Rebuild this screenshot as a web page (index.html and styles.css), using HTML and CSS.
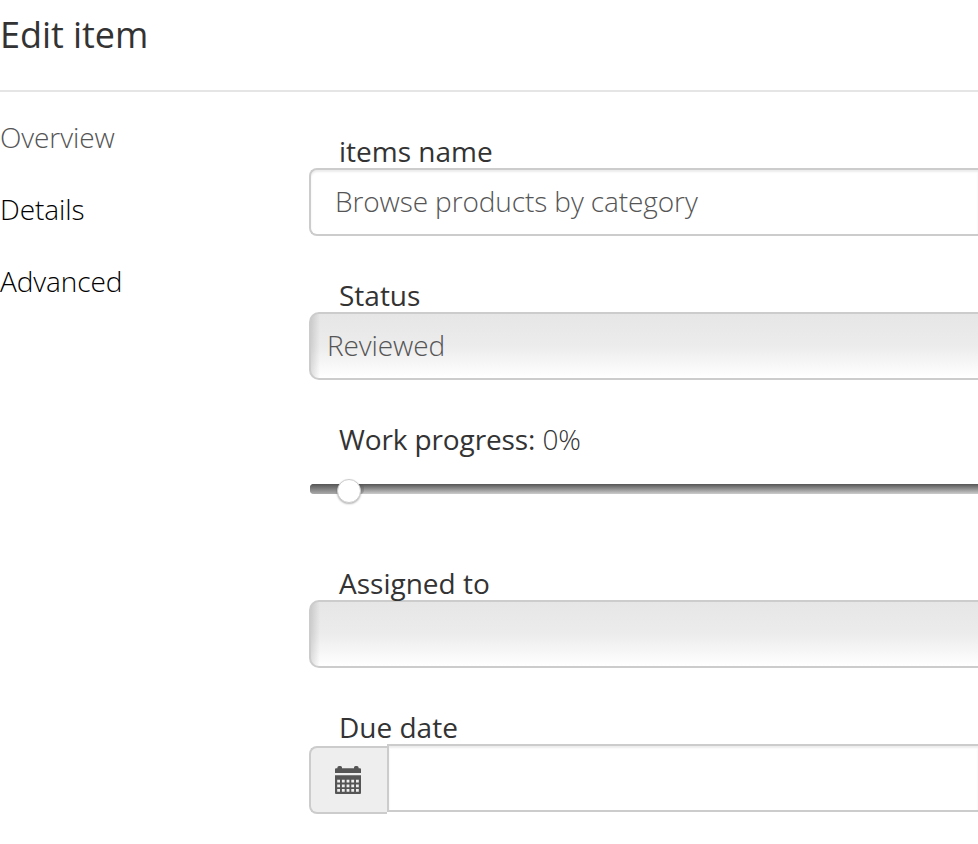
FILE: index.html
```
<!DOCTYPE html>
<html lang="en">
<head>
<meta charset="utf-8">
<title>Edit item</title>
<link rel="stylesheet" href="styles.css">
</head>
<body>
<header class="header"><h1>Edit item</h1></header>
<div class="layout">
  <nav class="nav">
    <a class="active">Overview</a>
    <a>Details</a>
    <a>Advanced</a>
  </nav>
  <main class="form">
    <div class="field">
      <label>items name</label>
      <div class="control input">Browse products by category</div>
    </div>
    <div class="field">
      <label>Status</label>
      <div class="control select">Reviewed</div>
    </div>
    <div class="field">
      <label class="progress-label">Work progress: <span class="percent">0%</span></label>
      <div class="slider"><div class="fill"><div class="thumb"></div></div></div>
    </div>
    <div class="field">
      <label>Assigned to</label>
      <div class="control select"></div>
    </div>
    <div class="field">
      <label>Due date</label>
      <div class="date">
        <div class="addon">
          <svg width="26" height="28" viewBox="0 0 26 28">
            <path fill="#555" d="M0 7V3.2Q0 2.2 1 2.2H2.4V1.5Q2.4 0 4 0H5.5Q7 0 7 1.5V2.2H19V1.5Q19 0 20.5 0H22Q23.6 0 23.6 1.5V2.2H25Q26 2.2 26 3.2V7zM0 9.2H26V27Q26 28 25 28H1Q0 28 0 27z"/>
            <path stroke="#eee" stroke-width="2.8" stroke-dasharray="2.8 1.9" d="M2.2 15.2H23.8M2.2 19.8H23.8M2.2 24.4H23.8"/>
          </svg>
        </div>
        <div class="date-input"></div>
      </div>
    </div>
  </main>
</div>
</body>
</html>
```
FILE: styles.css
```
* { box-sizing: border-box; }
body { margin: 0; background: #fff; color: #333; font: 400 28px/40px "Open Sans", sans-serif; }
.header { height: 92px; border-bottom: 2px solid #e5e5e5; }
h1 { margin: 0; font-size: 36px; font-weight: 400; line-height: 70px; letter-spacing: -.05px; }
.layout { display: flex; }
.nav { width: 309px; flex: none; display: flex; flex-direction: column; gap: 32px; padding-top: 25px; font-weight: 300; letter-spacing: -.1px; color: #000; }
.nav .active { color: #555; }
.form { flex: 1; min-width: 0; padding-top: 40px; }
.field { height: 144px; }
label { display: block; height: 36px; padding-left: 30px; line-height: 38px; white-space: nowrap; }
.progress-label { letter-spacing: -.12px; }
.percent { font-weight: 300; }
.control { height: 68px; border: 2px solid #ccc; border-right: 0; border-radius: 8px 0 0 8px; font-weight: 300; line-height: 62px; letter-spacing: -.1px; color: #555; }
.input { padding-left: 24px; box-shadow: inset 0 2px 2px rgba(0,0,0,.075); }
.select { padding-left: 16px; border-radius: 10px 0 0 10px; background: linear-gradient(90deg, rgba(0,0,0,.12), transparent 9px), linear-gradient(#e6e6e6, #ececec 50%, #fff); }
.slider { height: 10px; margin: 28px 0 0 1px; border-radius: 4px 0 0 4px; background: linear-gradient(#555, #ccc); }
.fill { width: 54px; height: 10px; border-radius: 4px; padding-left: 27px; background: linear-gradient(#555, #aaa); display: flex; align-items: center; }
.thumb { width: 24px; height: 24px; margin-top: 4px; flex: none; border: 1px solid #ccc; border-radius: 50%; background: #fff; box-shadow: 0 1px 2px rgba(0,0,0,.3); }
.date { display: flex; }
.addon { width: 78px; height: 68px; margin-top: 2px; border: 2px solid #ccc; border-right: 0; border-radius: 8px 0 0 8px; background: #eee; display: flex; align-items: center; padding-left: 24px; }
.date-input { flex: 1; height: 68px; border: 2px solid #ccc; border-right: 0; box-shadow: inset 0 2px 2px rgba(0,0,0,.075); }
```
